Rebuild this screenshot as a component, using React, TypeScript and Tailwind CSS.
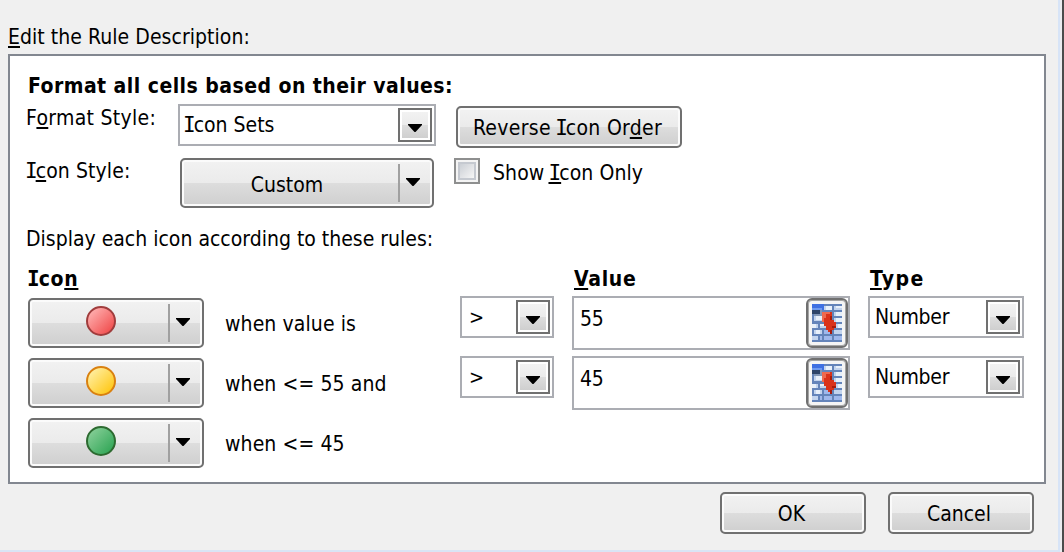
import React from "react";

const BTN =
  "flex shrink-0 rounded-[5px] border-2 border-[#707070] bg-[linear-gradient(#f2f2f2_0%,#ebebeb_49%,#dddddd_50%,#cfcfcf_100%)] shadow-[inset_0_0_0_2px_#fbfbfb]";

function I({ bold = false, u = false }: { bold?: boolean; u?: boolean }) {
  return (
    <span
      className={
        (bold ? "mx-[-1px] " : "mx-[-2px] ") +
        "font-['DejaVu_Sans_Mono',monospace] tracking-[0px]"
      }
    >
      {u ? <U>I</U> : "I"}
    </span>
  );
}

function U({ children }: { children: React.ReactNode }) {
  return (
    <span className="underline decoration-2 underline-offset-[2px] [text-decoration-skip-ink:none]">{children}</span>
  );
}

function Arrow() {
  return (
    <svg width="14" height="8" viewBox="0 0 14 8" className="shrink-0">
      <path d="M0 0H14V1L7.5 8H6.5L0 1Z" fill="#000" />
    </svg>
  );
}

function DropButton() {
  return (
    <span className="flex h-[34px] w-[34px] shrink-0 border-2 border-[#707070] bg-white p-[2px]">
      <span className="flex flex-1 justify-center bg-[linear-gradient(#f2f2f2_0%,#ebebeb_49%,#dddddd_50%,#cfcfcf_100%)] pt-[12px]">
        <Arrow />
      </span>
    </span>
  );
}

function Combo({ className, children }: { className: string; children: React.ReactNode }) {
  return (
    <div className={"flex h-[42px] shrink-0 justify-between border-2 border-[#abadb3] bg-white p-[2px] " + className}>
      <span className="pl-[3px] leading-[34px]">{children}</span>
      <DropButton />
    </div>
  );
}

function SplitButton({ className, children }: { className: string; children: React.ReactNode }) {
  return (
    <div className={BTN + " h-[50px] " + className}>
      <span className="flex flex-1 justify-center">{children}</span>
      <span className="mt-[4px] h-[38px] w-[2px] bg-[#a0a0a0]" />
      <span className="w-[32px] pt-[18px] pl-[6px]">
        <Arrow />
      </span>
    </div>
  );
}

function Dot({ id, from, to, edge }: { id: string; from: string; to: string; edge: string }) {
  return (
    <svg width="30" height="30" viewBox="0 0 30 30" className="mt-[6px] ml-[4px]">
      <defs>
        <linearGradient id={id} x1="0.1" y1="0.1" x2="0.9" y2="0.9">
          <stop offset="0" stopColor={from} />
          <stop offset="1" stopColor={to} />
        </linearGradient>
      </defs>
      <circle cx="15" cy="15" r="14" fill={`url(#${id})`} stroke={edge} strokeWidth="2" />
    </svg>
  );
}

function RangeIcon() {
  return (
    <svg width="30" height="38" viewBox="0 0 15 19" shapeRendering="crispEdges">
      <path fill="#6484ba" d="M0 0H15V19H0Z" />
      <path
        fill="#c3d4ee"
        d="M6 1H10V3H6ZM11 1H15V3H11ZM6 4H10V6H6ZM11 4H15V6H11ZM1 6H5V8.5H1ZM11 7H15V9H11ZM0 10H3V12H0ZM4 10H8V12H4ZM12 10H15V12H12ZM1 13H5V15H1ZM0 16H3V18H0ZM11 13H15V15H11Z"
      />
      <path
        fill="#e8f0fa"
        d="M7 1H10V3H7ZM12 1H15V2H12ZM12 4H15V6H12ZM2 6H5V8H2ZM12 7H15V9H12ZM0 10H2V12H0ZM4 10H7V11H4ZM13 10H15V12H13ZM2 13H4V15H2Z"
      />
      <path fill="#9fb8ec" d="M6 13H10V15H6ZM4 16H5V18H4ZM6 16H10V18H6ZM11 16H15V18H11Z" />
      <path fill="#3f70e2" d="M0 0H6V3H0Z" />
      <path fill="#6e9af0" d="M0 2H5V3H0Z" />
      <path fill="#2e4468" d="M0 3H4V5H0Z" />
      <path fill="#8397b5" d="M1 5H5V6H1ZM4 3H5V5H4Z" />
      <path fill="#d9321a" d="M5 4H10V8H11V9H12V12H11V13H10V15H9V14H8V13H7V11H6V9H5Z" />
      <path fill="#ee6a4e" d="M5 4H9V5H7V7H6V9H5Z" />
      <path fill="#a81c0c" d="M9 6H10V8H9ZM10 11H12V12H10ZM9 13H10V15H9Z" />
    </svg>
  );
}

function RuleRow({ dot, text, value }: { dot: React.ReactNode; text: string; value?: string }) {
  return (
    <div className="ml-[2px] flex h-[60px] items-start">
      <SplitButton className="mt-[2px] w-[176px]">{dot}</SplitButton>
      <span className="ml-[21px] w-[235px] pt-[14px] tracking-[0.1px]">{text}</span>
      {value && (
        <>
          <Combo className="w-[94px]">
            <span className="pl-[2px] text-[20px]">&gt;</span>
          </Combo>
          <div className="ml-[18px] flex h-[54px] w-[278px] justify-between border-2 border-[#abadb3]">
            <span className="pt-[7px] pl-[6px] tracking-[-0.3px]">{value}</span>
            <span className="flex h-[50px] w-[42px] items-center justify-center rounded-[6px] border-2 border-[#707070] bg-[#f5f5f5] shadow-[inset_0_0_0_1px_#a5a5a5]">
              <RangeIcon />
            </span>
          </div>
          <Combo className="ml-[18px] w-[156px] tracking-[-0.3px]">Number</Combo>
        </>
      )}
    </div>
  );
}

export default function App() {
  return (
    <div className="flex h-[552px] w-[1064px] overflow-hidden bg-[#f0f0f0] font-['DejaVu_Sans_Condensed','DejaVu_Sans',sans-serif] text-[21px] leading-[28px] whitespace-nowrap text-black [font-stretch:condensed]">
      <div className="flex w-[1058px] shrink-0 flex-col border-b-2 border-[#d9e5f5]">
        <div className="h-[54px] pt-[23px] pl-[8px] tracking-[0.05px]">
          <U>E</U>dit the Rule Description:
        </div>
        <div className="ml-[8px] flex h-[430px] w-[1038px] shrink-0 flex-col border-2 border-[#828790] bg-white pl-[16px]">
          <div className="h-[48px] pt-[16px] pl-[2px] font-bold tracking-[0.46px]">
            Format all cells based on their values:
          </div>
          <div className="flex h-[54px]">
            <span className="w-[152px] tracking-[0.3px]">
              F<U>o</U>rmat Style:
            </span>
            <Combo className="w-[258px]">
              <I />con Sets
            </Combo>
            <div className={BTN + " mt-[2px] ml-[20px] h-[42px] w-[226px] items-center justify-center"}>
              <span className="pt-[2px] pr-[3px] tracking-[0.3px]">
                Reverse <I />con Or<U>d</U>er
              </span>
            </div>
          </div>
          <div className="flex h-[80px]">
            <span className="-mt-[1px] w-[154px] pl-[1px] tracking-[0.1px]">
              <I />
              <U>c</U>on Style:
            </span>
            <SplitButton className="w-[254px]">
              <span className="pt-[11px] pr-[6px]">Custom</span>
            </SplitButton>
            <span className="ml-[20px] flex h-[26px] w-[26px] border-2 border-[#8e8f8f] bg-[#f4f4f4] p-[2px]">
              <span className="flex-1 border-2 border-[#c5c9d0] bg-[linear-gradient(135deg,#cbcfd5,#f6f6f6)]" />
            </span>
            <span className="ml-[13px] pt-[1px] tracking-[0.1px]">
              Show <I u />con Only
            </span>
          </div>
          <div className="-mt-[13px] h-[26px]">Display each icon according to these rules:</div>
          <div className="mt-[14px] flex h-[31px] pl-[2px] font-bold tracking-[0.7px]">
            <span className="w-[546px]">
              <I bold />
              co<U>n</U>
            </span>
            <span className="w-[296px]">
              <U>V</U>alue
            </span>
            <span className="tracking-[1.4px]">
              <U>T</U>ype
            </span>
          </div>
          <RuleRow
            dot={<Dot id="red" from="#ffb3b3" to="#f04a4a" edge="#a03c3c" />}
            text="when value is"
            value="55"
          />
          <RuleRow
            dot={<Dot id="yellow" from="#fff0a8" to="#ffc610" edge="#d98010" />}
            text="when <= 55 and"
            value="45"
          />
          <RuleRow dot={<Dot id="green" from="#88cf98" to="#2fa555" edge="#2c6a30" />} text="when <= 45" />
        </div>
        <div className="mt-[8px] ml-[720px] flex gap-[22px]">
          <div className={BTN + " h-[42px] w-[146px] items-center justify-center"}>
            <span className="pt-[2px] pr-[3px]">OK</span>
          </div>
          <div className={BTN + " h-[42px] w-[146px] items-center justify-center"}>
            <span className="pt-[2px] pr-[4px]">Cancel</span>
          </div>
        </div>
      </div>
      <div className="w-[2px] bg-[#d7e4f7]" />
      <div className="w-[2px] bg-[#ececf0]" />
      <div className="w-[2px] bg-[#4c4c4c]" />
    </div>
  );
}
